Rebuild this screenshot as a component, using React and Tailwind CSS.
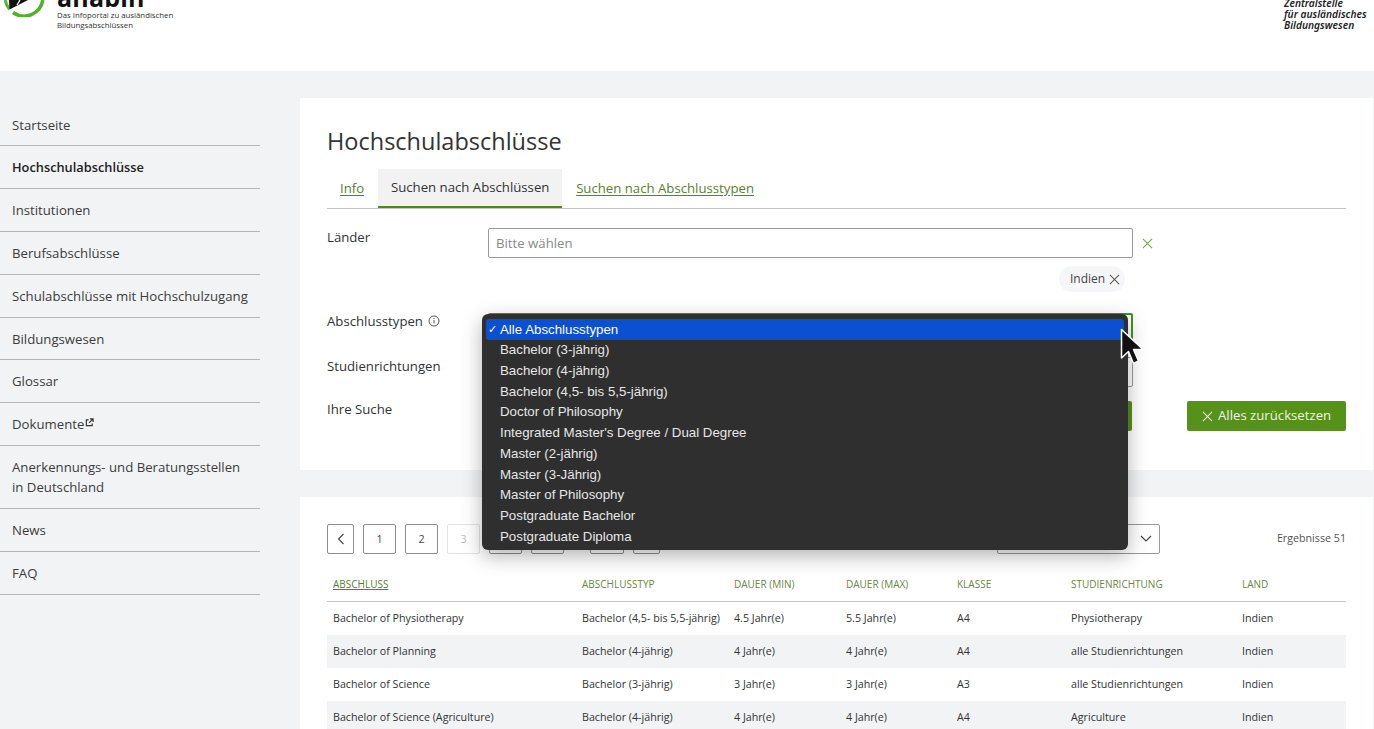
const nav = ["Startseite","Hochschulabschlüsse","Institutionen","Berufsabschlüsse","Schulabschlüsse mit Hochschulzugang","Bildungswesen","Glossar","Dokumente","Anerkennungs- und Beratungsstellen in Deutschland","News","FAQ"];
const options = ["Bachelor (3-jährig)","Bachelor (4-jährig)","Bachelor (4,5- bis 5,5-jährig)","Doctor of Philosophy","Integrated Master's Degree / Dual Degree","Master (2-jährig)","Master (3-Jährig)","Master of Philosophy","Postgraduate Bachelor","Postgraduate Diploma"];
const heads = ["Abschluss","Abschlusstyp","Dauer (min)","Dauer (max)","Klasse","Studienrichtung","Land"];
const rows = [
  ["Bachelor of Physiotherapy","Bachelor (4,5- bis 5,5-jährig)","4.5 Jahr(e)","5.5 Jahr(e)","A4","Physiotherapy","Indien"],
  ["Bachelor of Planning","Bachelor (4-jährig)","4 Jahr(e)","4 Jahr(e)","A4","alle Studienrichtungen","Indien"],
  ["Bachelor of Science","Bachelor (3-jährig)","3 Jahr(e)","3 Jahr(e)","A3","alle Studienrichtungen","Indien"],
  ["Bachelor of Science (Agriculture)","Bachelor (4-jährig)","4 Jahr(e)","4 Jahr(e)","A4","Agriculture","Indien"],
];
const gridCols = "grid grid-cols-[249px_152px_112px_111px_114px_171px_1fr] pl-[6px]";

function X({ size = 12, className = "" }) {
  return (
    <svg width={size} height={size} viewBox="0 0 12 12" className={className} fill="none" stroke="currentColor" strokeWidth="1.1">
      <path d="M1 1l10 10M11 1L1 11" />
    </svg>
  );
}

function PageBtn({ children, className = "" }) {
  return (
    <div className={"h-[30px] flex items-center justify-center rounded-[2px] border border-[#8e8e8e] text-[10.7px] text-[#444] " + className}>
      {children}
    </div>
  );
}

export default function App() {
  return (
    <div className="relative h-[729px] w-[1374px] overflow-hidden bg-[#f2f3f5] font-['Open_Sans',sans-serif] text-[#333]">
      <header className="relative flex h-[71px] justify-between overflow-hidden bg-white">
        <div className="flex -mt-[25px] h-[96px]">
          <svg width="57" height="42" viewBox="0 0 57 42" className="shrink-0">
            <path d="M5.200 25A19 19 0 0 0 9.500 34.200" fill="none" stroke="#5ab52e" strokeWidth="3" />
            <path d="M13 37.500A19 19 0 0 0 42.800 25" fill="none" stroke="#4fb32a" strokeWidth="3.500" />
            <path d="M9.500 34.500L9 25H28z" fill="#111" />
            <path d="M20 25L17 30" stroke="#fff" strokeWidth="1.300" />
          </svg>
          <div className="pt-[11px]">
            <div className="text-[25px] font-bold leading-[22px] tracking-[0.2px] text-[#111]">anabin</div>
            <div className="mt-[3px] text-[7.8px] leading-[9.5px] text-[#333]">Das Infoportal zu ausländischen<br />Bildungsabschlüssen</div>
          </div>
        </div>
        <div className="-mt-[2px] w-[90px] whitespace-nowrap font-['Noto_Sans',sans-serif] text-[10.200px] font-semibold italic leading-[11px] text-[#222]">
          Zentralstelle<br />für ausländisches<br />Bildungswesen
        </div>
      </header>

      <div className="flex">
        <nav className="mt-[32px] w-[260px] shrink-0">
          {nav.map((n, i) => (
            <div key={n} className={"border-b border-[#b5b5b5] pl-[12px] pr-[10px] leading-[20px] " + (i === 0 ? "pt-[12px] pb-[10px] " : i === 5 ? "pt-[11px] pb-[10px] " : "py-[11px] ") + (i === 1 ? "text-[12.800px] font-semibold text-[#222]" : "text-[13.2px] text-[#3c3c3c]")}>
              {n}
              {n === "Dokumente" && (
                <svg width="9" height="9" viewBox="0 0 10 10" className="ml-[1px] inline-block -translate-y-[3px]" fill="none" stroke="#333" strokeWidth="1.3">
                  <path d="M4 2H1.500v6.500H8V6M5.500 1H9v3.500M9 1L4.500 5.500" />
                </svg>
              )}
            </div>
          ))}
        </nav>

        <main className="ml-[40px] mr-[1px] min-w-0 flex-1 pt-[27px]">
          <section className="bg-white pl-[27px] pr-[27px] pt-[27px] pb-[39px]">
            <h1 className="text-[23.500px] leading-[32px] text-[#333]">Hochschulabschlüsse</h1>
            <div className="mt-[12px] flex h-[40px] border-b border-[#c4c4c4] text-[13.2px]">
              <div className="flex h-[39px] items-center pl-[13px] pr-[14px] text-[#5d8030] underline underline-offset-2">Info</div>
              <div className="flex h-[39px] w-[184px] items-center justify-center border-b-2 border-[#4f8a10] bg-[#f2f2f2] font-medium text-[#333]">Suchen nach Abschlüssen</div>
              <div className="flex h-[39px] items-center pl-[14px] text-[#5d8030] underline underline-offset-2">Suchen nach Abschlusstypen</div>
            </div>

            <div className="mt-[19px] flex">
              <div className="w-[161px] text-[13.2px] leading-[18px]">Länder</div>
              <div className="flex h-[30px] w-[645px] items-center rounded-[2px] border border-[#9a9a9a] px-[7px] pt-[1px] text-[13.2px] text-[#8a8a8a]">Bitte wählen</div>
              <X size={11} className="ml-[9px] mt-[10px] text-[#7ba23f]" />
            </div>
            <div className="mt-[8px] ml-[732px] flex h-[26px] w-[66px] items-center gap-[4px] rounded-full bg-[#f5f6f7] pl-[11px] text-[12px] text-[#444]">
              Indien <X size={11} className="text-[#555]" />
            </div>

            <div className="mt-[21px] flex">
              <div className="-mt-[1px] flex w-[161px] items-center gap-[5px] self-start text-[13.2px] leading-[18px]">
                Abschlusstypen
                <svg width="12" height="12" viewBox="0 0 12 12" fill="none" stroke="#555" strokeWidth="1">
                  <circle cx="6" cy="6" r="5" /><path d="M6 5v3.500M6 3v1" />
                </svg>
              </div>
              <div className="h-[30px] w-[645px] rounded-[2px] border-2 border-[#3c9a18]" />
            </div>

            <div className="mt-[14px] flex">
              <div className="w-[161px] text-[13.2px] leading-[18px]">Studienrichtungen</div>
              <div className="h-[30px] w-[645px] rounded-[2px] border border-[#9a9a9a]" />
            </div>

            <div className="mt-[14px] flex">
              <div className="-mt-[1px] w-[161px] text-[13.2px] leading-[18px]">Ihre Suche</div>
              <div className="flex w-[645px] justify-end">
                <div className="h-[30px] w-[112px] rounded-[2px] bg-[#56911b]" />
              </div>
              <div className="ml-[55px] flex h-[30px] w-[159px] items-center justify-center gap-[5px] rounded-[2px] bg-[#56911b] text-[13.2px] text-[#f0f5e6]">
                <X size={11} className="text-[#e8f0d8]" /> Alles zurücksetzen
              </div>
            </div>
          </section>

          <section className="mt-[27px] bg-white pl-[27px] pr-[27px] pt-[27px] pb-[10px]">
            <div className="flex items-center">
              <PageBtn className="w-[27px]">
                <svg width="8" height="12" viewBox="0 0 8 12" fill="none" stroke="#444" strokeWidth="1.1"><path d="M6.500 1L1.500 6l5 5" /></svg>
              </PageBtn>
              <PageBtn className="ml-[9px] w-[33px]">1</PageBtn>
              <PageBtn className="ml-[9px] w-[33px]">2</PageBtn>
              <PageBtn className="ml-[9px] w-[33px] border-[#e2e2e2] text-[#bbb]">3</PageBtn>
              <div className="ml-[9px] h-[30px] w-[33px] rounded-[2px] border border-[#8e8e8e]" />
              <div className="ml-[9px] h-[30px] w-[33px] rounded-[2px] border border-[#8e8e8e]" />
              <div className="ml-[26px] h-[30px] w-[34px] rounded-[2px] border border-[#8e8e8e]" />
              <div className="ml-[9px] h-[30px] w-[27px] rounded-[2px] border border-[#8e8e8e]" />
              <div className="ml-[337px] flex h-[30px] w-[163px] items-center justify-end rounded-[2px] border border-[#9a9a9a] pr-[7px]">
                <svg width="12" height="8" viewBox="0 0 12 8" fill="none" stroke="#444" strokeWidth="1.1"><path d="M1 1l5 5 5-5" /></svg>
              </div>
              <div className="ml-auto -mt-[2px] text-[10.700px] text-[#555]">Ergebnisse 51</div>
            </div>

            <div className={gridCols + " mt-[22px] h-[26px] border-b border-[#c8c8c8] text-[10px] uppercase leading-[16px] text-[#6d8540]"}>
              {heads.map((h, i) => (
                <div key={h} className={i === 0 ? "text-[#55801f] underline" : ""}>{h}</div>
              ))}
            </div>
            {rows.map((r, i) => (
              <div key={r[0]} className={gridCols + " h-[33px] items-center text-[10.700px] text-[#333] " + (i % 2 ? "bg-[#f2f3f5]" : "")}>
                {r.map((c, j) => <div key={j}>{c}</div>)}
              </div>
            ))}
          </section>
        </main>
      </div>

      <div className="absolute left-[482px] top-[314px] h-[236px] w-[646px] rounded-[6px] bg-[#2f2f2f] px-[4px] pt-[5px] font-['Liberation_Sans',sans-serif] text-[13.300px] text-[#e6e6e6] shadow-[0_6px_20px_rgba(0,0,0,0.3)]">
        <div className="flex h-[21px] items-center rounded-[3px] bg-[#0a50d0] text-white">
          <span className="w-[14px] pl-[2px] text-[11px]">✓</span>Alle Abschlusstypen
        </div>
        {options.map((o) => (
          <div key={o} className="flex h-[20.700px] items-center pl-[14px]">{o}</div>
        ))}
      </div>

      <svg width="26" height="38" viewBox="0 0 26 38" className="absolute left-[1120px] top-[328px]">
        <path d="M1.500 1.500V30l7-6.500 5 12 5-2.500-5-11.500h9.500z" fill="#111" stroke="#fff" strokeWidth="1.500" strokeLinejoin="round" />
      </svg>
    </div>
  );
}
